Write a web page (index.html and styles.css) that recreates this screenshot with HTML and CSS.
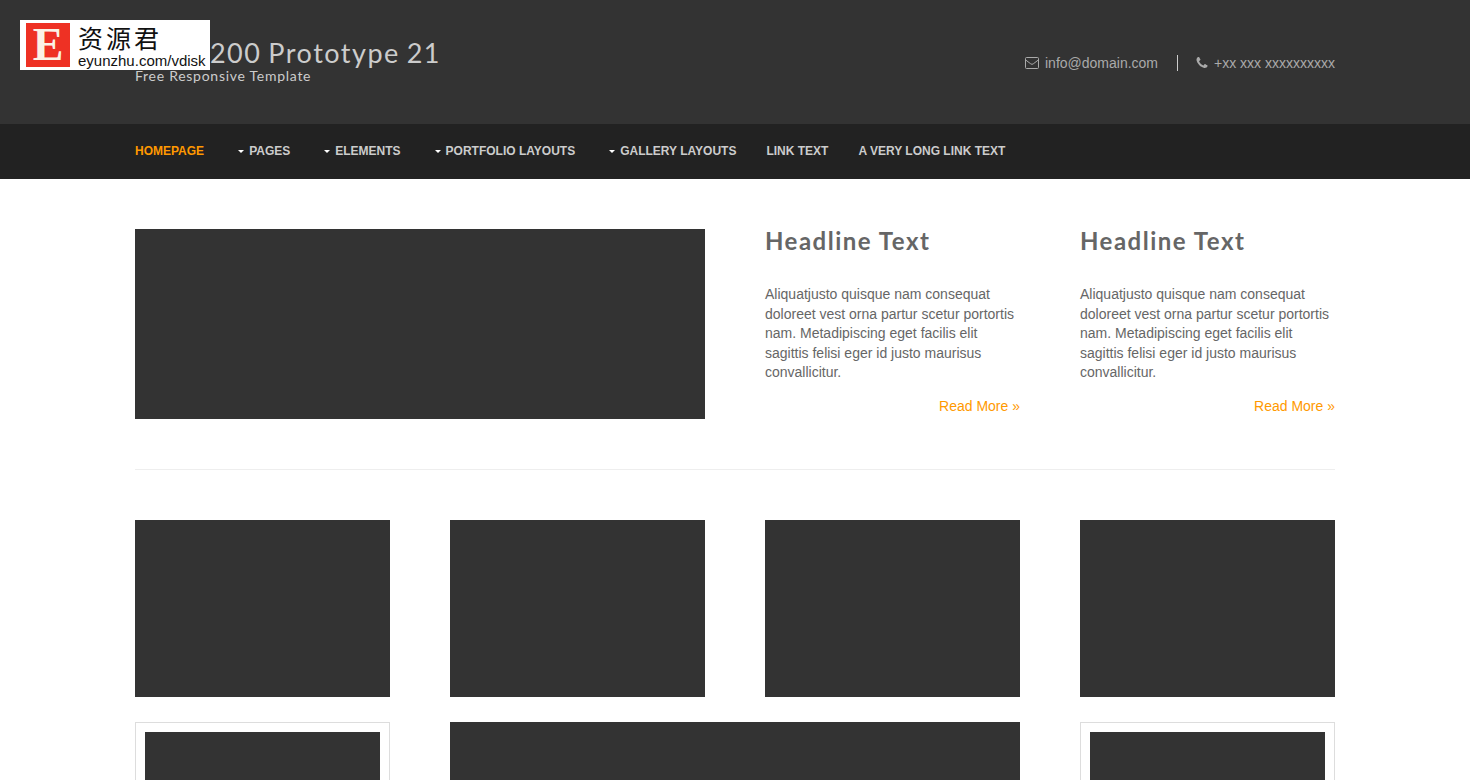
FILE: index.html
```html
<!DOCTYPE html>
<html>
<head>
    <title>Site 1200 Prototype 21</title>
    <link rel="stylesheet" href="styles.css">
</head>
<body>
    <!-- watermark sits over the header -->
    <div class="stamp">
        <div class="stamp-mark">E</div>
        <div class="stamp-text">
            <div class="stamp-cn">资源君</div>
            <div class="stamp-url">eyunzhu.com/vdisk</div>
        </div>
    </div>

    <header class="top">
        <div class="wrap top-inner">
            <div>
                <div class="site-title">Site 1200 Prototype 21</div>
                <div class="site-sub">Free Responsive Template</div>
            </div>
            <ul class="contact">
                <li>
                    <svg class="icon" viewBox="0 0 14 12"><path d="M1.5 .5h11a1 1 0 0 1 1 1v9a1 1 0 0 1-1 1h-11a1 1 0 0 1-1-1v-9a1 1 0 0 1 1-1zM.7 3l5 3.8a2 2 0 0 0 2.6 0l5-3.8" fill="none" stroke="currentColor"/></svg>
                    info@domain.com
                </li>
                <li>
                    <svg class="icon icon-phone" viewBox="128 128 1536 1536"><path fill="currentColor" d="M1600 1240q0 27-10 70.5t-21 68.5q-21 50-122 106-94 51-186 51-27 0-53-3.5t-57.5-12.5-47-14.5-55.5-20.5-49-18q-98-35-175-83-127-79-264-216t-216-264q-48-77-83-175-3-9-18-49t-20.5-55.5-14.5-47-12.5-57.5-3.5-53q0-92 51-186 56-101 106-122 25-11 68.5-21t70.5-10q14 0 21 3 18 6 53 76 11 19 30 54t35 63.5 31 53.5q3 4 17.5 25t21.5 35.5 7 28.5q0 20-28.5 50t-62 55-62 53-28.5 46q0 9 5 22.5t8.5 20.5 14 24 11.5 19q76 137 174 235t235 174q2 1 19 11.5t24 14 20.5 8.5 22.5 5q18 0 46-28.5t53-62 55-62 50-28.5q14 0 28.5 7t35.5 21.5 25 17.5q25 15 53.5 31t63.5 35 54 30q70 35 76 53 3 7 3 21z"/></svg>
                    +xx xxx xxxxxxxxxx
                </li>
            </ul>
        </div>
    </header>

    <nav class="mainnav">
        <ul class="wrap nav-list">
            <li class="active">Homepage</li>
            <li class="drop">Pages</li>
            <li class="drop">Elements</li>
            <li class="drop">Portfolio Layouts</li>
            <li class="drop">Gallery Layouts</li>
            <li>Link Text</li>
            <li>A Very Long Link Text</li>
        </ul>
    </nav>

    <main class="wrap content">
        <section class="intro">
            <div class="block block-intro"></div>
            <article>
                <h2>Headline Text</h2>
                <p>Aliquatjusto quisque nam consequat doloreet vest orna partur scetur portortis nam. Metadipiscing eget facilis elit sagittis felisi eger id justo maurisus convallicitur.</p>
                <a class="more" href="#">Read More &raquo;</a>
            </article>
            <article>
                <h2>Headline Text</h2>
                <p>Aliquatjusto quisque nam consequat doloreet vest orna partur scetur portortis nam. Metadipiscing eget facilis elit sagittis felisi eger id justo maurisus convallicitur.</p>
                <a class="more" href="#">Read More &raquo;</a>
            </article>
        </section>

        <hr class="rule">

        <section class="four">
            <div class="block block-small"></div>
            <div class="block block-small"></div>
            <div class="block block-small"></div>
            <div class="block block-small"></div>
        </section>

        <section class="four row-next">
            <div class="framed"><div class="block block-framed"></div></div>
            <div class="block wide"></div>
            <div class="framed"><div class="block block-framed"></div></div>
        </section>
    </main>
</body>
</html>
```

FILE: styles.css
```css
* {
    box-sizing: border-box;
}
body {
    margin: 0;
    font-family: "Liberation Sans", Arial, sans-serif;
    font-size: 14px;
    line-height: 1.4;
    color: #666;
    background-color: #fff;
}
ul {
    list-style: none;
    margin: 0;
    padding: 0;
}
.wrap {
    width: 1200px;
    margin: 0 auto;
}

/* watermark */
.stamp {
    position: absolute;
    top: 20px;
    left: 20px;
    width: 190px;
    height: 50px;
    display: flex;
    background-color: #fff;
    color: #111;
}
.stamp-mark {
    width: 44px;
    height: 44px;
    margin: 3px 0 0 6px;
    background-color: #ee3124;
    color: #fbf3e6;
    font-family: "Liberation Serif", serif;
    font-weight: bold;
    font-size: 46px;
    line-height: 44px;
    text-align: center;
}
.stamp-text {
    margin-left: 8px;
}
.stamp-cn {
    font-family: "Noto Sans CJK SC", sans-serif;
    font-size: 25px;
    line-height: 34px;
    letter-spacing: 3px;
}
.stamp-url {
    font-size: 15px;
    line-height: 14px;
    white-space: nowrap;
}

/* header */
.top {
    height: 124px;
    background-color: #333;
}
.top-inner {
    height: 100%;
    padding-top: 36px;
    display: flex;
    justify-content: space-between;
}
.site-title {
    font-family: Lato, sans-serif;
    font-size: 27px;
    line-height: 33px;
    letter-spacing: 1.5px;
    word-spacing: -1.5px;
    color: #ccc;
}
.site-sub {
    font-family: Lato, sans-serif;
    font-size: 14px;
    line-height: 14px;
    letter-spacing: 0.73px;
    color: #ccc;
}
.contact {
    display: flex;
    height: 16px;
    margin-top: 19px;
    line-height: 16px;
    color: #aaa;
}
.contact li {
    display: flex;
    align-items: center;
    gap: 6px;
}
.contact li + li {
    margin-left: 19px;
    padding-left: 18px;
    border-left: 1px solid #ccc;
}
.icon {
    width: 14px;
    height: 12px;
}
.icon-phone {
    width: 12px;
}

/* nav */
.mainnav {
    height: 55px;
    background-color: #222;
}
.nav-list {
    display: flex;
    gap: 30px;
    font-size: 12px;
    font-weight: bold;
    line-height: 55px;
    text-transform: uppercase;
    color: #ccc;
}
.nav-list .active {
    color: #f90;
}
.drop::before {
    content: "";
    display: inline-block;
    margin: 0 5px 1px 4px;
    border-top: 3px solid #fff;
    border-left: 3px solid transparent;
    border-right: 3px solid transparent;
    vertical-align: middle;
}

/* content */
.content {
    padding-top: 50px;
    padding-bottom: 50px;
}
.intro {
    display: grid;
    grid-template-columns: 570px 255px 255px;
    gap: 60px;
}
.block {
    background-color: #333;
}
.block-intro {
    height: 190px;
}
.intro h2 {
    margin: 0 0 32px;
    font-family: Lato, sans-serif;
    font-size: 24px;
    font-weight: bold;
    line-height: 24px;
    letter-spacing: 1.5px;
    color: #666;
}
.intro p {
    margin: 0 0 14px;
}
.more {
    display: block;
    text-align: right;
    color: #f90;
    text-decoration: none;
}
.rule {
    height: 1px;
    margin: 50px 0;
    border: 0;
    background-color: #eee;
}
.four {
    display: grid;
    grid-template-columns: repeat(4, 255px);
    gap: 60px;
}
.row-next {
    margin-top: 25px;
}
.block-small {
    height: 177px;
}
.wide {
    grid-column: span 2;
}
.framed {
    padding: 9px;
    border: 1px solid #ddd;
}
.block-framed {
    height: 157px;
}
```
